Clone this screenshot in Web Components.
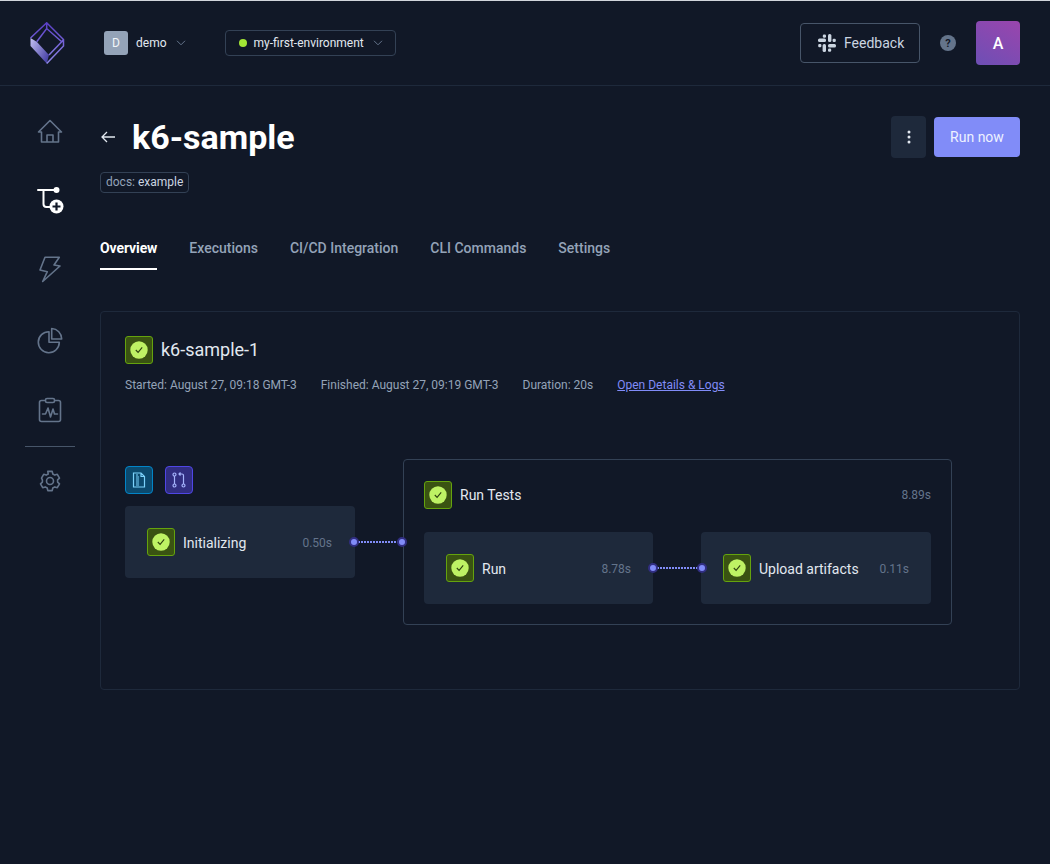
<!DOCTYPE html>
<html>
<head>
<meta charset="utf-8">
<title>k6-sample</title>
<style>
  html, body { margin: 0; height: 100%; background: #111827; }
  body { font-family: Roboto, "Liberation Sans", sans-serif; color: #e2e8f0; }
</style>
</head>
<body>
<app-shell>
  <app-header></app-header>
  <side-nav></side-nav>
  <job-page></job-page>
</app-shell>

<script>
  // Status badge used by the run title and by every step
  class StatusIcon extends HTMLElement {
    constructor() {
      super();
      this.attachShadow({ mode: "open" });
      this.shadowRoot.innerHTML = `
        <style>
          :host { display: block; width: 28px; height: 28px; flex: none; }
          .box {
            box-sizing: border-box;
            width: 28px;
            height: 28px;
            display: flex;
            align-items: center;
            justify-content: center;
            background: #3a5312;
            border: 1px solid #65a30d;
            border-radius: 3px;
          }
        </style>
        <div class="box">
          <svg width="18" height="18" viewBox="0 0 18 18">
            <circle cx="9" cy="9" r="8.7" fill="#bef264"/>
            <path d="M5.800 9l2.300 2.400 4.100-5" fill="none" stroke="#2f4210" stroke-width="1.100"/>
          </svg>
        </div>
      `;
    }
  }

  // One step of the pipeline: status, name and how long it took
  class StepNode extends HTMLElement {
    constructor() {
      super();
      this.attachShadow({ mode: "open" });
      this.shadowRoot.innerHTML = `
        <style>
          :host { display: block; box-sizing: border-box; width: 230px; height: 72px; }
          .node {
            box-sizing: border-box;
            height: 100%;
            display: flex;
            align-items: center;
            gap: 8px;
            padding: 0 var(--pad-right, 22px) 0 22px;
            background: #1e293b;
            border-radius: 4px;
          }
          .name { flex: 1; font-size: 14px; color: #e2e8f0; padding-top: 2px; }
          .time { font-size: 12px; color: #64748b; padding-top: 1px; }
        </style>
        <div class="node">
          <status-icon></status-icon>
          <span class="name"><slot></slot></span>
          <span class="time">${this.getAttribute("time") || ""}</span>
        </div>
      `;
    }
  }

  // Dotted link with a round port on both ends, it lies over the boxes it joins
  class StepLink extends HTMLElement {
    constructor() {
      super();
      const from = Number(this.getAttribute("from") || -1);
      const to = Number(this.getAttribute("to") || 47);
      this.attachShadow({ mode: "open" });
      this.shadowRoot.innerHTML = `
        <style>
          :host { display: block; position: relative; z-index: 1; width: 48px; height: 72px; flex: none; }
          svg { display: block; overflow: visible; }
        </style>
        <svg width="48" height="72" viewBox="0 0 48 72">
          <line x1="${from + 4}" y1="36" x2="${to - 3}" y2="36" stroke="#818cf8" stroke-width="2" stroke-dasharray="2 1"/>
          <circle cx="${from}" cy="36" r="4" fill="#818cf8" stroke="#312e81" stroke-width="2"/>
          <circle cx="${to}" cy="36" r="4" fill="#818cf8" stroke="#312e81" stroke-width="2"/>
        </svg>
      `;
    }
  }

  class AppHeader extends HTMLElement {
    constructor() {
      super();
      this.attachShadow({ mode: "open" });
      this.shadowRoot.innerHTML = `
        <style>
          :host {
            display: flex;
            box-sizing: border-box;
            height: 85px;
            align-items: center;
            padding: 0 30px;
            border-bottom: 1px solid #1e293b;
          }
          .logo { display: block; width: 35px; height: 43px; }
          .team { display: flex; align-items: center; margin-left: 39px; font-size: 12px; color: #e2e8f0; }
          .avatar {
            width: 24px; height: 24px; border-radius: 3px; background: #94a3b8; color: #f1f5f9;
            display: flex; align-items: center; justify-content: center; font-size: 12px; margin-right: 8px;
          }
          .chev { display: block; margin-left: 9px; }
          .env {
            box-sizing: border-box;
            display: flex; align-items: center;
            margin-left: 39px; height: 26px; width: 171px; padding-left: 13px;
            border: 1px solid #334155; border-radius: 4px;
            font-size: 12px; color: #e2e8f0;
          }
          .dot { width: 8px; height: 8px; border-radius: 50%; background: #a3e635; margin-right: 7px; }
          .spacer { flex: 1; }
          .feedback {
            box-sizing: border-box;
            display: flex; align-items: center; gap: 8px;
            width: 120px; height: 40px; padding-left: 17px;
            border: 1px solid #475569; border-radius: 4px;
            font-size: 14px; color: #cbd5e1;
          }
          .help {
            width: 16px; height: 16px; border-radius: 50%; margin: 0 20px;
            background: #64748b; color: #111827; font-size: 11px; font-weight: 700;
            display: flex; align-items: center; justify-content: center;
          }
          .user {
            width: 44px; height: 44px; border-radius: 4px; color: #fff; font-size: 16px; font-weight: 500;
            background: linear-gradient(30deg, #6d4fb5, #9a45ad);
            display: flex; align-items: center; justify-content: center;
          }
        </style>
        <svg class="logo" viewBox="0 0 35 43">
          <defs>
            <linearGradient id="side" x1="0" y1="0" x2="1" y2="0.7">
              <stop offset="0" stop-color="#c4c1f2"/>
              <stop offset="1" stop-color="#4a44a8"/>
            </linearGradient>
            <linearGradient id="edge" x1="0" y1="0" x2="0" y2="1">
              <stop offset="0" stop-color="#5b3fc8"/>
              <stop offset="1" stop-color="#8f88e6"/>
            </linearGradient>
          </defs>
          <path d="M.5 16l6.200 3.700L19 33l-2.300 8.500L.5 24z" fill="url(#side)"/>
          <path d="M.5 16L16.700 .8 33.500 17.500V24L16.700 41.500M16.700 .8v5.700M6.700 19.700L16.700 6.500 31.700 19.700 19 33M31.700 19.700l1.800-2.200" fill="none" stroke="url(#edge)" stroke-width="1.500"/>
        </svg>
        <div class="team">
          <span class="avatar">D</span>
          <span>demo</span>
          <svg class="chev" width="10" height="6" viewBox="0 0 10 6"><path d="M1 .8l4 4 4-4" fill="none" stroke="#64748b" stroke-width="1"/></svg>
        </div>
        <div class="env">
          <span class="dot"></span>
          <span>my-first-environment</span>
          <svg class="chev" width="10" height="6" viewBox="0 0 10 6"><path d="M1 .8l4 4 4-4" fill="none" stroke="#64748b" stroke-width="1"/></svg>
        </div>
        <div class="spacer"></div>
        <div class="feedback">
          <svg width="18" height="18" viewBox="0 0 18 18" fill="#cbd5e1">
            <rect x="0" y="4.600" width="8" height="3.400" rx="1.500"/>
            <rect x="4.800" y=".5" width="3.200" height="3.200" rx="1.200"/>
            <rect x="10" y="0" width="3.400" height="8" rx="1.500"/>
            <rect x="14.600" y="4.800" width="3.200" height="3.200" rx="1.200"/>
            <rect x="10" y="10" width="8" height="3.400" rx="1.500"/>
            <rect x="10" y="14.600" width="3.200" height="3.200" rx="1.200"/>
            <rect x="4.600" y="10" width="3.400" height="8" rx="1.500"/>
            <rect x=".2" y="10" width="3.200" height="3.200" rx="1.200"/>
          </svg>
          <span>Feedback</span>
        </div>
        <div class="help">?</div>
        <div class="user">A</div>
      `;
    }
  }

  class SideNav extends HTMLElement {
    constructor() {
      super();
      this.attachShadow({ mode: "open" });
      this.shadowRoot.innerHTML = `
        <style>
          :host { display: flex; flex-direction: column; align-items: center; width: 100px; padding-top: 32px; color: #64748b; }
          svg { display: block; width: 26px; height: 26px; fill: none; stroke: currentColor; stroke-width: 1.600; stroke-linejoin: round; stroke-linecap: round; overflow: visible; }
          .item { height: 69px; }
          .pie { height: 69px; padding-top: 3px; }
          .active { color: #fff; }
          hr { width: 50px; border: 0; border-top: 1px solid #475569; margin: -20px 0 21px; }
        </style>
        <div class="item">
          <svg viewBox="0 0 26 26"><path d="M1.500 14L13 2.500 24.500 14h-3v10h-17V14zM10 24v-7h6v7"/></svg>
        </div>
        <div class="item active">
          <svg viewBox="0 0 26 26">
            <path d="M1 3h18M6.500 3v14a3 3 0 0 0 3 3h4" stroke-width="2"/>
            <circle cx="19.500" cy="3" r="3" fill="currentColor" stroke="none"/>
            <circle cx="19.500" cy="19.500" r="7" fill="currentColor" stroke="none"/>
            <path d="M15.500 19.500h8M19.500 15.500v8" stroke="#111827" stroke-width="2.200" stroke-linecap="butt"/>
          </svg>
        </div>
        <div class="item">
          <svg viewBox="0 0 26 26"><path d="M8 1.300h14.300L17 9l6 1L5.700 25.500l4.600-9.800L3 14z"/></svg>
        </div>
        <div class="item pie">
          <svg viewBox="0 0 26 26"><path d="M12 3.700A10.500 10.500 0 1 0 22.300 14.300H12z"/><path d="M14.700 .5A10.600 10.600 0 0 1 24.700 11H14.700z"/></svg>
        </div>
        <div class="item">
          <svg viewBox="0 0 26 26">
            <rect x="2.500" y="3.500" width="21" height="21" rx="2"/>
            <rect x="8.500" y="1.500" width="9" height="4" rx="1.500" fill="#111827"/>
            <path d="M5.500 17h3l2.500-6 2.500 9 2.500-8 1.500 5h3"/>
          </svg>
        </div>
        <hr>
        <div class="item">
          <svg viewBox="0 0 26 26">
            <path d="M10.800 3.400h4.400l.6 2.600 2 1.100 2.500-.8 2.200 3.800-1.900 1.800v2.200l1.900 1.800-2.200 3.800-2.500-.8-2 1.100-.6 2.600h-4.400l-.6-2.600-2-1.100-2.500.8-2.200-3.800 1.900-1.800v-2.200L4.500 10.100l2.200-3.800 2.500.8 2-1.100z"/>
            <circle cx="13" cy="13" r="3.500"/>
          </svg>
        </div>
      `;
    }
  }

  class JobPage extends HTMLElement {
    constructor() {
      super();
      this.attachShadow({ mode: "open" });
      this.shadowRoot.innerHTML = `
        <style>
          :host { display: block; padding-right: 30px; min-width: 0; }
          .top { display: flex; align-items: flex-start; padding-top: 30px; height: 56px; }
          .title { display: flex; align-items: center; height: 42px; flex: 1; }
          .back { display: block; margin-right: 17px; margin-left: 1px; }
          h1 { margin: 0; font-size: 34px; font-weight: 700; color: #fff; line-height: 42px; }
          .kebab {
            width: 35px; height: 42px; border-radius: 4px; background: #1e293b; margin-right: 8px;
            display: flex; align-items: center; justify-content: center;
          }
          .run {
            box-sizing: border-box; width: 86px; height: 40px; margin-top: 1px; border-radius: 4px;
            background: #818cf8; color: #eef2ff; font-size: 14px;
            display: flex; align-items: center; justify-content: center;
          }
          .tag {
            display: inline-block; box-sizing: border-box; height: 21px; line-height: 19px; padding: 0 5px;
            border: 1px solid #334155; border-radius: 4px; font-size: 12px; color: #cbd5e1;
            vertical-align: top;
          }
          .tag span { color: #94a3b8; }
          nav {
            display: flex; gap: 32px; margin-top: 36px; height: 41px; font-size: 14px; font-weight: 500; color: #94a3b8;
          }
          nav a { display: block; padding-top: 11px; box-sizing: border-box; height: 41px; }
          nav a.on { color: #fff; font-weight: 700; letter-spacing: -.1px; border-bottom: 2px solid #fff; }
          .card {
            box-sizing: border-box; height: 379px; margin-top: 41px; padding: 24px;
            border: 1px solid #1e293b; border-radius: 4px;
          }
          .head { display: flex; align-items: center; gap: 8px; }
          .head span { font-size: 18px; color: #e2e8f0; padding-bottom: 2px; }
          .meta { display: flex; margin-top: 13px; font-size: 12px; color: #94a3b8; line-height: 16px; }
          .meta span { margin-right: 24px; }
          .meta a { color: #818cf8; text-decoration: underline; }
          .flow { display: flex; align-items: flex-start; margin-top: 66px; }
          .col { display: flex; flex-direction: column; width: 230px; padding-top: 7px; }
          .chips { display: flex; gap: 12px; margin-bottom: 12px; }
          .chip {
            box-sizing: border-box; width: 28px; height: 28px; border-radius: 4px;
            display: flex; align-items: center; justify-content: center;
          }
          .chip.doc { background: #0c4a6e; border: 1px solid #0284c7; }
          .chip.git { background: #312e81; border: 1px solid #4f46e5; }
          .group {
            box-sizing: border-box; width: 549px; height: 166px; padding: 21px 20px 20px;
            border: 1px solid #334155; border-radius: 4px;
          }
          .ghead { display: flex; align-items: center; gap: 8px; font-size: 14px; color: #e2e8f0; }
          .ghead .n { flex: 1; }
          .ghead .t { font-size: 12px; color: #64748b; }
          .gbody { display: flex; margin-top: 23px; }
          .gbody step-node { width: 229px; }
          .gbody step-node:last-child { width: 230px; }
          .link-wrap { padding-top: 47px; }
          .first { --pad-right: 23px; }
        </style>
        <div class="top">
          <div class="title">
            <svg class="back" width="14" height="12" viewBox="0 0 14 12"><path d="M14 6H1M6 1L1 6l5 5" fill="none" stroke="#e2e8f0" stroke-width="1.300"/></svg>
            <h1>k6-sample</h1>
          </div>
          <div class="kebab">
            <svg width="4" height="14" viewBox="0 0 4 14" fill="#e2e8f0"><circle cx="2" cy="2" r="1.500"/><circle cx="2" cy="7" r="1.500"/><circle cx="2" cy="12" r="1.500"/></svg>
          </div>
          <div class="run">Run now</div>
        </div>
        <div class="tag"><span>docs:</span> example</div>
        <nav>
          <a class="on">Overview</a>
          <a>Executions</a>
          <a>CI/CD Integration</a>
          <a>CLI Commands</a>
          <a>Settings</a>
        </nav>
        <section class="card">
          <div class="head"><status-icon></status-icon><span>k6-sample-1</span></div>
          <div class="meta">
            <span>Started: August 27, 09:18 GMT-3</span>
            <span>Finished: August 27, 09:19 GMT-3</span>
            <span>Duration: 20s</span>
            <a>Open Details &amp; Logs</a>
          </div>
          <div class="flow">
            <div class="col">
              <div class="chips">
                <div class="chip doc">
                  <svg width="14" height="16" viewBox="0 0 14 16" fill="none" stroke="#7dd3fc" stroke-width="1.200">
                    <path d="M1.500 1h7.500l3.500 3.500V15h-11zM9 1v3.500h3.500"/>
                    <path d="M4 3h2M4 5h3M4 7h3M4 9h3M4 11h3M4 13h3" stroke-width="1"/>
                  </svg>
                </div>
                <div class="chip git">
                  <svg width="16" height="16" viewBox="0 0 16 16" fill="none" stroke="#a5b4fc" stroke-width="1.200">
                    <circle cx="3.500" cy="2.500" r="1.500"/><circle cx="3.500" cy="13.500" r="1.500"/><circle cx="12.500" cy="13.500" r="1.500"/>
                    <path d="M3.500 4v8M12.500 12V3.500a1.500 1.500 0 0 0-1.500-1.500H8M9.500 .5L8 2l1.500 1.500"/>
                  </svg>
                </div>
              </div>
              <step-node class="first" time="0.50s">Initializing</step-node>
            </div>
            <div class="link-wrap"><step-link></step-link></div>
            <div class="group">
              <div class="ghead"><status-icon></status-icon><span class="n">Run Tests</span><span class="t">8.89s</span></div>
              <div class="gbody">
                <step-node time="8.78s">Run</step-node>
                <step-link from="0" to="49"></step-link>
                <step-node time="0.11s">Upload artifacts</step-node>
              </div>
            </div>
          </div>
        </section>
      `;
    }
  }

  // Page frame: the thin light line on top, header, nav column and content
  class AppShell extends HTMLElement {
    constructor() {
      super();
      this.attachShadow({ mode: "open" });
      this.shadowRoot.innerHTML = `
        <style>
          :host {
            display: grid;
            grid-template-columns: 100px 1fr;
            grid-template-rows: 85px 1fr;
            box-sizing: border-box;
            height: 864px;
            overflow: hidden;
            border-top: 1px solid #d1d5db;
            background: #111827;
          }
          ::slotted(app-header) { grid-column: 1 / 3; }
        </style>
        <slot></slot>
      `;
    }
  }

  customElements.define("status-icon", StatusIcon);
  customElements.define("step-node", StepNode);
  customElements.define("step-link", StepLink);
  customElements.define("app-header", AppHeader);
  customElements.define("side-nav", SideNav);
  customElements.define("job-page", JobPage);
  customElements.define("app-shell", AppShell);
</script>
</body>
</html>
